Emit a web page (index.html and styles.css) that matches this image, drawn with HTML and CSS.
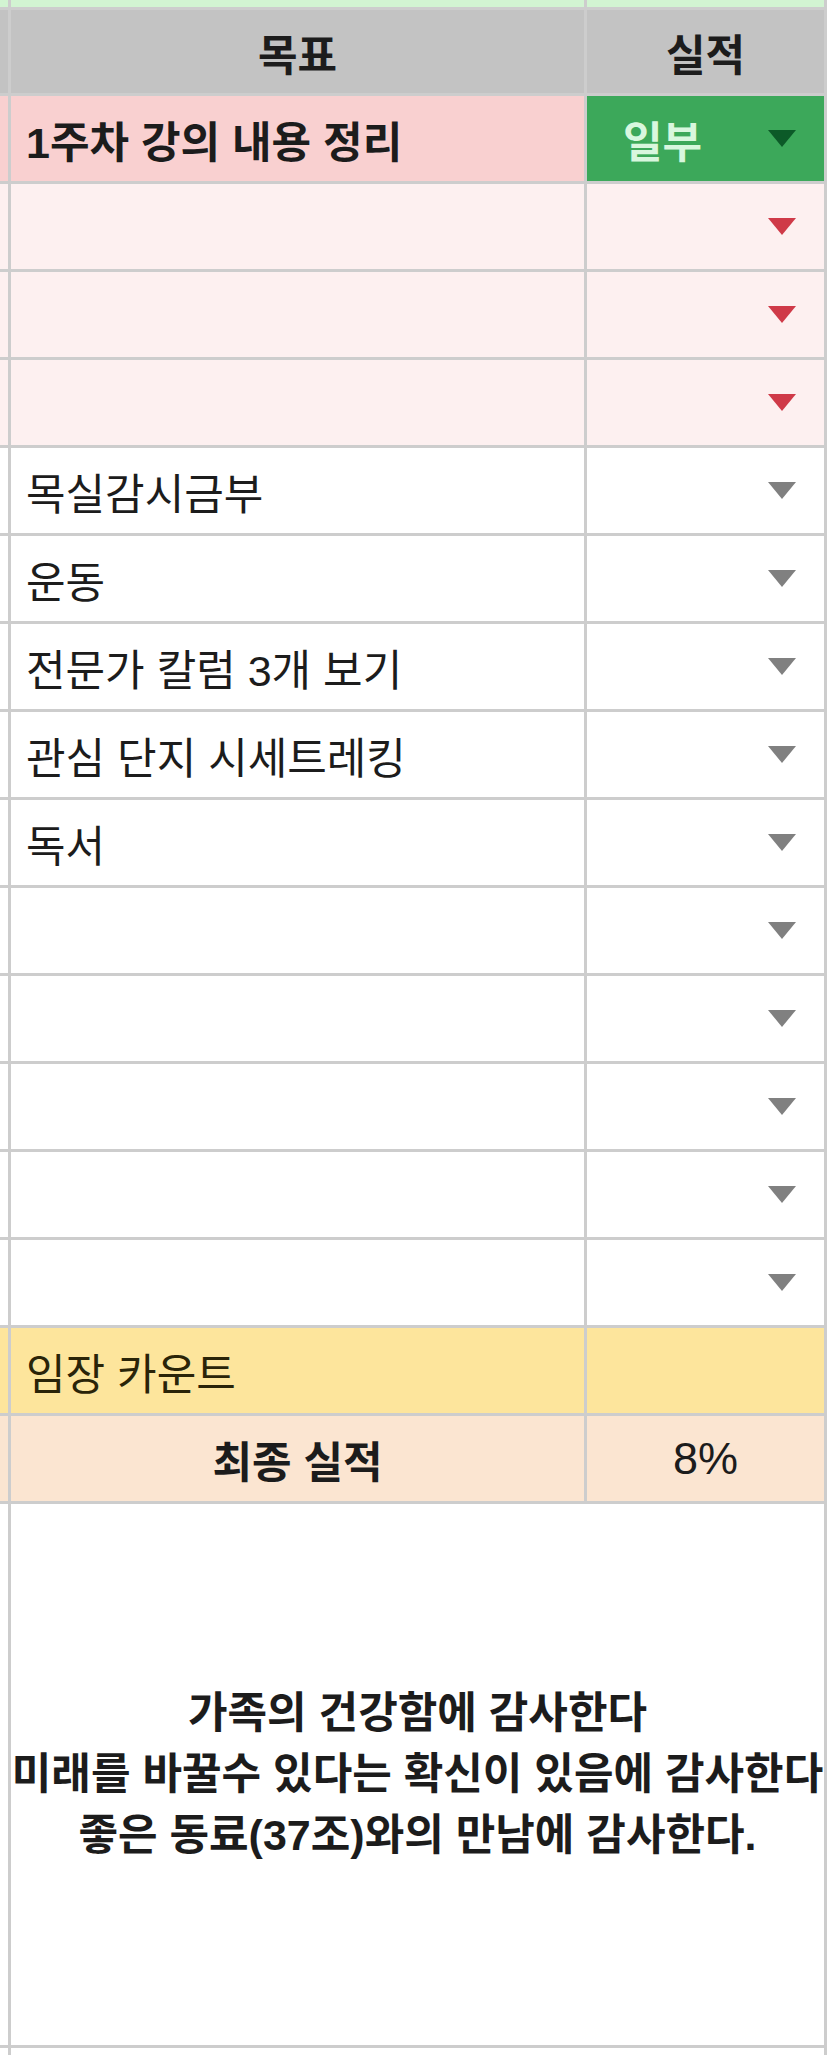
FILE: index.html
```html
<!DOCTYPE html>
<html lang="ko">
<head>
  <meta charset="UTF-8">
  <meta name="viewport" content="width=device-width, initial-scale=1.0">
  <title>주간 목표 시트</title>
  <link rel="stylesheet" href="styles.css">
</head>
<body>
  <div class="sheet">
    <!-- row above header (cut off) -->
    <div class="cell stub top"></div>
    <div class="cell top"></div>
    <div class="cell top"></div>

    <div class="cell stub head"></div>
    <div class="cell head center bold">목표</div>
    <div class="cell head center bold">실적</div>

    <div class="cell stub pink"></div>
    <div class="cell pink bold">1주차 강의 내용 정리</div>
    <div class="cell done"><span class="chip">일부</span><span class="arrow dark"></span></div>

    <div class="cell stub pale"></div>
    <div class="cell pale"></div>
    <div class="cell pale drop"><span class="arrow red"></span></div>

    <div class="cell stub pale"></div>
    <div class="cell pale"></div>
    <div class="cell pale drop"><span class="arrow red"></span></div>

    <div class="cell stub pale"></div>
    <div class="cell pale"></div>
    <div class="cell pale drop"><span class="arrow red"></span></div>

    <div class="cell stub"></div>
    <div class="cell">목실감시금부</div>
    <div class="cell drop"><span class="arrow"></span></div>

    <div class="cell stub"></div>
    <div class="cell">운동</div>
    <div class="cell drop"><span class="arrow"></span></div>

    <div class="cell stub"></div>
    <div class="cell">전문가 칼럼 3개 보기</div>
    <div class="cell drop"><span class="arrow"></span></div>

    <div class="cell stub"></div>
    <div class="cell">관심 단지 시세트레킹</div>
    <div class="cell drop"><span class="arrow"></span></div>

    <div class="cell stub"></div>
    <div class="cell">독서</div>
    <div class="cell drop"><span class="arrow"></span></div>

    <div class="cell stub"></div>
    <div class="cell"></div>
    <div class="cell drop"><span class="arrow"></span></div>

    <div class="cell stub"></div>
    <div class="cell"></div>
    <div class="cell drop"><span class="arrow"></span></div>

    <div class="cell stub"></div>
    <div class="cell"></div>
    <div class="cell drop"><span class="arrow"></span></div>

    <div class="cell stub"></div>
    <div class="cell"></div>
    <div class="cell drop"><span class="arrow"></span></div>

    <div class="cell stub"></div>
    <div class="cell"></div>
    <div class="cell drop"><span class="arrow"></span></div>

    <div class="cell stub yellow"></div>
    <div class="cell yellow">임장 카운트</div>
    <div class="cell yellow"></div>

    <div class="cell stub peach"></div>
    <div class="cell peach center bold">최종 실적</div>
    <div class="cell peach center pct">8%</div>

    <div class="cell stub"></div>
    <div class="cell wide thanks">가족의 건강함에 감사한다<br>미래를 바꿀수 있다는 확신이 있음에 감사한다<br>좋은 동료(37조)와의 만남에 감사한다.</div>

    <div class="cell stub"></div>
    <div class="cell wide"></div>
  </div>
</body>
</html>
```

FILE: styles.css
```css
body {
  margin: 0;
  background: #fff;
  font-family: "Liberation Sans", "Noto Sans CJK KR", sans-serif;
  color: #1c1c1c;
}
.sheet {
  display: grid;
  grid-template-columns: 8px 573px 237px;
  grid-template-rows: 7px 83px repeat(16, 85px) 541px 7px;
  gap: 3px;
  padding-right: 3px;
  width: 824px;
  background: #cdcdcd;
}
.cell {
  background: #fff;
  display: flex;
  align-items: center;
  padding-left: 15px;
  font-size: 43px;
  white-space: nowrap;
  overflow: hidden;
}
.stub {
  padding: 0;
}
.center {
  justify-content: center;
  padding-left: 0;
}
.bold {
  font-weight: 700;
}
.pct {
  font-size: 45px;
}
.top {
  background: #d2f4d2;
}
.head {
  background: #c3c3c3;
}
.pink {
  background: #f9d0d0;
}
.pale {
  background: #fdf0f0;
}
.yellow {
  background: #fde59c;
  color: #2a2408;
}
.peach {
  background: #fbe5d1;
}
.done {
  background: #3ca85a;
  justify-content: space-between;
  padding-left: 36px;
  padding-right: 28px;
}
.chip {
  color: #d8f7de;
  font-weight: 700;
}
.drop {
  justify-content: flex-end;
  padding-right: 28px;
}
.arrow {
  width: 0;
  height: 0;
  border-left: 14px solid transparent;
  border-right: 14px solid transparent;
  border-top: 17px solid #808080;
}
.arrow.red {
  border-top-color: #cf3a48;
}
.arrow.dark {
  border-top-color: #0c5a28;
}
.wide {
  grid-column: span 2;
}
.thanks {
  justify-content: center;
  padding-left: 0;
  text-align: center;
  font-weight: 700;
  line-height: 61px;
  overflow: visible;
}
```
